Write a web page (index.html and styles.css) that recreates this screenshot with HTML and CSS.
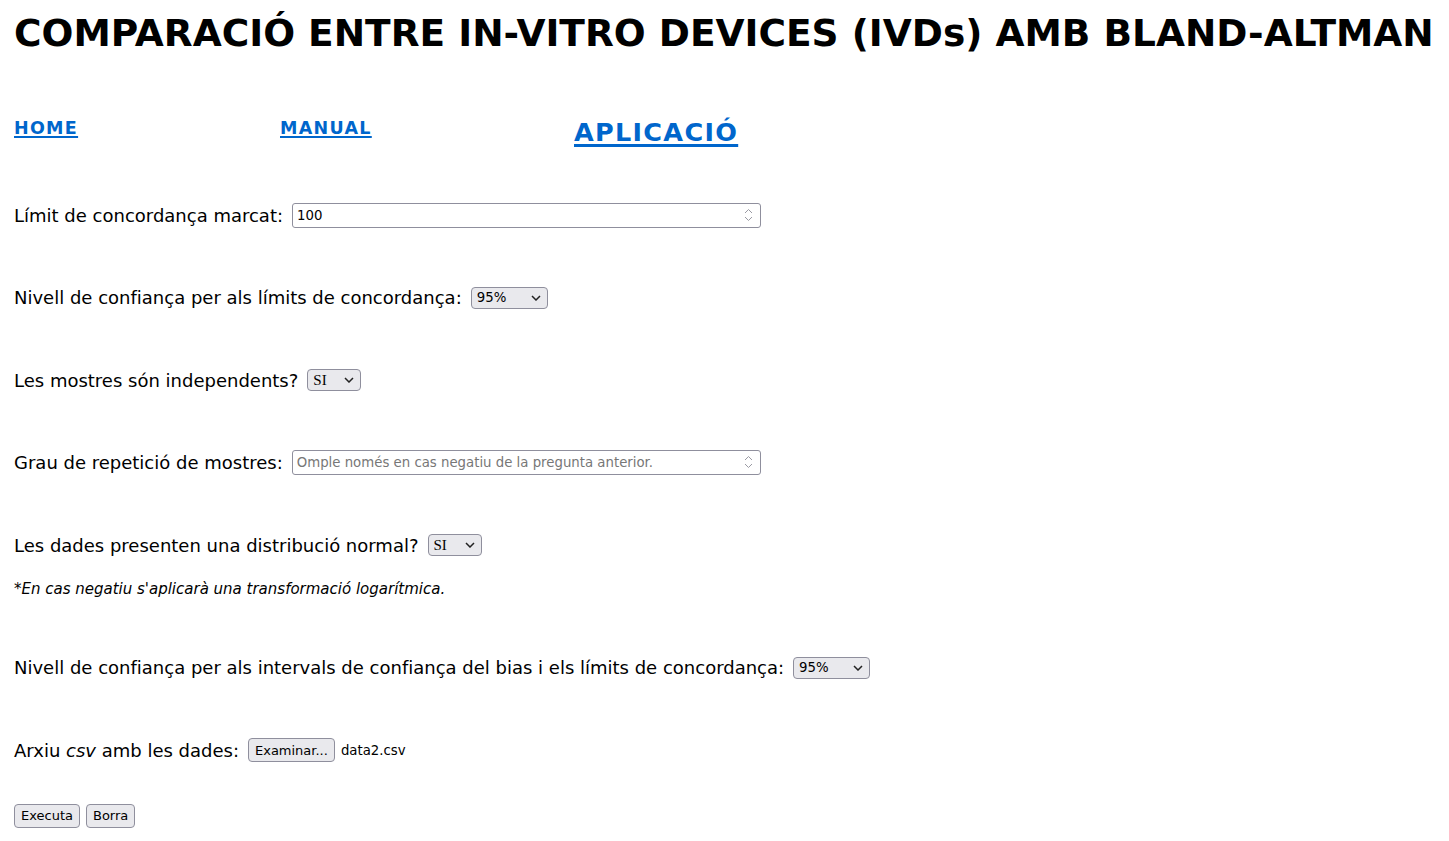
FILE: index.html
```html
<!DOCTYPE html>
<html lang="ca">
<head>
<meta charset="utf-8">
<title>Bland-Altman</title>
<link rel="stylesheet" href="styles.css">
</head>
<body>
<div class="page">
  <h1 class="title">COMPARACIÓ ENTRE IN-VITRO DEVICES (IVDs) AMB BLAND-ALTMAN</h1>
  <nav class="nav">
    <a class="nav-link nav-home" href="#">HOME</a>
    <a class="nav-link nav-manual" href="#">MANUAL</a>
    <a class="nav-link nav-app" href="#">APLICACIÓ</a>
  </nav>
  <form class="form">
    <div class="row r1">
      <label>Límit de concordança marcat:</label>
      <span class="num num-wide"><input class="num-input" type="text" value="100"><svg class="spin" width="9" height="14" viewBox="0 0 9 14"><path d="M1 5 L4.5 1.5 L8 5 M1 9 L4.5 12.5 L8 9" fill="none" stroke="#9a9aa3" stroke-width="1"/></svg></span>
    </div>
    <div class="row r2">
      <label>Nivell de confiança per als límits de concordança:</label>
      <span class="sel sel-95"><select><option>95%</option><option>90%</option><option>99%</option></select><svg class="chev" width="10" height="6" viewBox="0 0 10 6"><path d="M1 1 L5 5 L9 1" fill="none" stroke="#222" stroke-width="1.5"/></svg></span>
    </div>
    <div class="row r3">
      <label>Les mostres són independents?</label>
      <span class="sel sel-si"><select><option>SI</option><option>NO</option></select><svg class="chev" width="10" height="6" viewBox="0 0 10 6"><path d="M1 1 L5 5 L9 1" fill="none" stroke="#222" stroke-width="1.5"/></svg></span>
    </div>
    <div class="row r4">
      <label>Grau de repetició de mostres:</label>
      <span class="num num-wide"><input class="num-input" type="text" placeholder="Omple només en cas negatiu de la pregunta anterior."><svg class="spin" width="9" height="14" viewBox="0 0 9 14"><path d="M1 5 L4.5 1.5 L8 5 M1 9 L4.5 12.5 L8 9" fill="none" stroke="#9a9aa3" stroke-width="1"/></svg></span>
    </div>
    <div class="group">
      <div class="row r5">
        <label>Les dades presenten una distribució normal?</label>
        <span class="sel sel-si"><select><option>SI</option><option>NO</option></select><svg class="chev" width="10" height="6" viewBox="0 0 10 6"><path d="M1 1 L5 5 L9 1" fill="none" stroke="#222" stroke-width="1.5"/></svg></span>
      </div>
      <p class="note">*En cas negatiu s'aplicarà una transformació logarítmica.</p>
    </div>
    <div class="row r6">
      <label>Nivell de confiança per als intervals de confiança del bias i els límits de concordança:</label>
      <span class="sel sel-95"><select><option>95%</option><option>90%</option><option>99%</option></select><svg class="chev" width="10" height="6" viewBox="0 0 10 6"><path d="M1 1 L5 5 L9 1" fill="none" stroke="#222" stroke-width="1.5"/></svg></span>
    </div>
    <div class="row r7">
      <label>Arxiu <em>csv</em> amb les dades:</label>
      <button type="button" class="btn">Examinar...</button>
      <span class="filename">data2.csv</span>
    </div>
    <div class="actions">
      <button type="button" class="btn">Executa</button>
      <button type="button" class="btn">Borra</button>
    </div>
  </form>
</div>
</body>
</html>
```

FILE: styles.css
```css
html, body {
  margin: 0;
  padding: 0;
  background: #ffffff;
  color: #000000;
}
.page {
  padding: 0 14px;
  font-family: "DejaVu Sans", Verdana, sans-serif;
}
.title {
  margin: 0;
  padding-top: 10px;
  font-size: 37.5px;
  font-weight: bold;
  line-height: 46px;
  white-space: nowrap;
}
.nav {
  display: flex;
  align-items: flex-start;
  margin-top: 60px;
}
.nav-link {
  color: #0066cc;
  font-family: "DejaVu Sans", Verdana, sans-serif;
  font-weight: bold;
  font-size: 17.5px;
  letter-spacing: 1.3px;
  line-height: 24px;
  text-decoration: underline;
  text-decoration-thickness: 2px;
  text-underline-offset: 2px;
}
.nav-home { width: 266px; }
.nav-manual { width: 294px; }
.nav-app {
  font-size: 25.5px;
  letter-spacing: 1.3px;
  line-height: 30px;
  margin-top: 1px;
  text-decoration-thickness: 3px;
  text-underline-offset: 3px;
}

.form {
  display: flex;
  flex-direction: column;
  margin-top: 55px;
  gap: 56.5px;
}
.row {
  display: flex;
  align-items: center;
  gap: 9px;
  font-size: 18px;
  height: 26px;
}
.row label { white-space: nowrap; }
.group {
  display: flex;
  flex-direction: column;
}
.note {
  margin: 22px 0 0;
  font-size: 15px;
  font-style: italic;
}
.num {
  position: relative;
  display: inline-flex;
}
.num-input {
  box-sizing: border-box;
  width: 469px;
  height: 25px;
  border: 1px solid #8f8f9d;
  border-radius: 3px;
  padding: 0 24px 0 4px;
  font-family: "DejaVu Sans", Verdana, sans-serif;
  font-size: 13.3px;
  color: #000;
  background: #fff;
  outline: none;
}
.num-input::placeholder { color: #777; opacity: 1; }
.spin {
  position: absolute;
  right: 8px;
  top: 5px;
}
.sel {
  position: relative;
  display: inline-flex;
}
.sel select {
  appearance: none;
  -webkit-appearance: none;
  box-sizing: border-box;
  height: 22px;
  border: 1px solid #8f8f9d;
  border-radius: 4px;
  background: #e9e9ed;
  font-family: "DejaVu Sans", Verdana, sans-serif;
  font-size: 13.3px;
  color: #000;
  padding: 0 0 0 5px;
}
.sel-95 select { width: 77px; }
.sel-si select { width: 54px; font-family: "Liberation Serif", "Times New Roman", serif; font-size: 15px; }
.chev {
  position: absolute;
  right: 7px;
  top: 8px;
  pointer-events: none;
}
.btn {
  box-sizing: border-box;
  height: 24px;
  border: 1px solid #8f8f9d;
  border-radius: 4px;
  background: #e9e9ed;
  font-family: "DejaVu Sans", Verdana, sans-serif;
  font-size: 13px;
  color: #000;
  padding: 0 6px;
}
.filename {
  font-family: "DejaVu Sans", Verdana, sans-serif;
  font-size: 13.3px;
  margin-left: -3px;
}
.actions {
  display: flex;
  gap: 6px;
  margin-top: -16px;
}
```
